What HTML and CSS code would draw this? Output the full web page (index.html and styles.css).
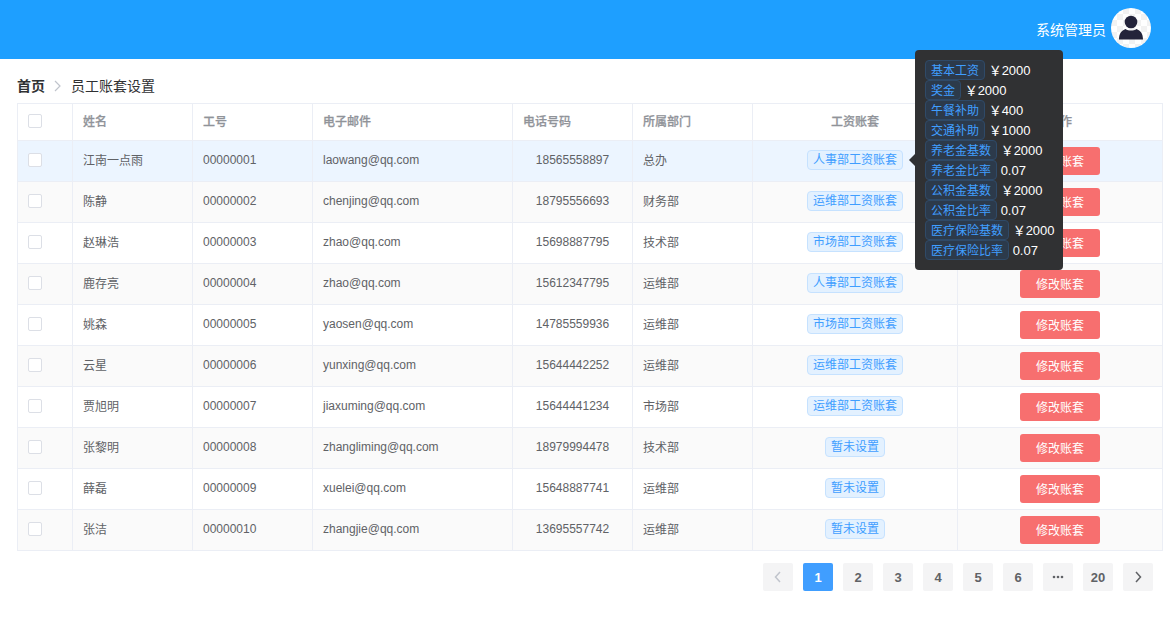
FILE: index.html
```html
<!DOCTYPE html>
<html lang="zh">
<head>
<meta charset="utf-8">
<title>员工账套设置</title>
<link rel="stylesheet" href="styles.css">
</head>
<body>
<header class="topbar">
  <span class="user-name">系统管理员</span>
  <span class="avatar">
    <svg viewBox="0 0 40 40" width="40" height="40">
      <defs><pattern id="chk" width="12" height="12" patternUnits="userSpaceOnUse"><rect width="12" height="12" fill="#fff"/><rect width="6" height="6" fill="#f2f2f2"/><rect x="6" y="6" width="6" height="6" fill="#f2f2f2"/></pattern></defs>
      <circle cx="20" cy="20" r="20" fill="url(#chk)"/>
      <circle cx="20" cy="14" r="6.300" fill="#23233a"/>
      <path d="M8 31.500c0-6 2.500-9 6.500-10.500 3 2 8 2 11 0 4 1.500 6.500 4.500 6.500 10.500z" fill="#23233a"/>
    </svg>
  </span>
</header>
<main class="content">
  <nav class="crumbs"><b>首页</b><svg class="crumb-sep" viewBox="0 0 10 12" width="10" height="12"><path d="M2 1l5 5-5 5" fill="none" stroke="#c0c4cc" stroke-width="1.200"/></svg><span>员工账套设置</span></nav>
  <table class="grid">
    <colgroup><col class="c1"><col class="c2"><col class="c3"><col class="c4"><col class="c5"><col class="c6"><col class="c7"><col class="c8"></colgroup>
    <thead>
      <tr><th class="box"><i class="check"></i></th><th>姓名</th><th>工号</th><th>电子邮件</th><th>电话号码</th><th>所属部门</th><th class="mid">工资账套</th><th class="mid">操作</th></tr>
    </thead>
    <tbody>
      <tr class="hover"><td class="box"><i class="check"></i></td><td class="cn">江南一点雨</td><td>00000001</td><td>laowang@qq.com</td><td class="mid">18565558897</td><td class="cn">总办</td><td class="mid"><span class="tag">人事部工资账套</span></td><td class="mid act"><button class="btn">修改账套</button></td></tr>
      <tr class="alt"><td class="box"><i class="check"></i></td><td class="cn">陈静</td><td>00000002</td><td>chenjing@qq.com</td><td class="mid">18795556693</td><td class="cn">财务部</td><td class="mid"><span class="tag">运维部工资账套</span></td><td class="mid act"><button class="btn">修改账套</button></td></tr>
      <tr><td class="box"><i class="check"></i></td><td class="cn">赵琳浩</td><td>00000003</td><td>zhao@qq.com</td><td class="mid">15698887795</td><td class="cn">技术部</td><td class="mid"><span class="tag">市场部工资账套</span></td><td class="mid act"><button class="btn">修改账套</button></td></tr>
      <tr class="alt"><td class="box"><i class="check"></i></td><td class="cn">鹿存亮</td><td>00000004</td><td>zhao@qq.com</td><td class="mid">15612347795</td><td class="cn">运维部</td><td class="mid"><span class="tag">人事部工资账套</span></td><td class="mid act"><button class="btn">修改账套</button></td></tr>
      <tr><td class="box"><i class="check"></i></td><td class="cn">姚森</td><td>00000005</td><td>yaosen@qq.com</td><td class="mid">14785559936</td><td class="cn">运维部</td><td class="mid"><span class="tag">市场部工资账套</span></td><td class="mid act"><button class="btn">修改账套</button></td></tr>
      <tr class="alt"><td class="box"><i class="check"></i></td><td class="cn">云星</td><td>00000006</td><td>yunxing@qq.com</td><td class="mid">15644442252</td><td class="cn">运维部</td><td class="mid"><span class="tag">运维部工资账套</span></td><td class="mid act"><button class="btn">修改账套</button></td></tr>
      <tr><td class="box"><i class="check"></i></td><td class="cn">贾旭明</td><td>00000007</td><td>jiaxuming@qq.com</td><td class="mid">15644441234</td><td class="cn">市场部</td><td class="mid"><span class="tag">运维部工资账套</span></td><td class="mid act"><button class="btn">修改账套</button></td></tr>
      <tr class="alt"><td class="box"><i class="check"></i></td><td class="cn">张黎明</td><td>00000008</td><td>zhangliming@qq.com</td><td class="mid">18979994478</td><td class="cn">技术部</td><td class="mid"><span class="tag">暂未设置</span></td><td class="mid act"><button class="btn">修改账套</button></td></tr>
      <tr><td class="box"><i class="check"></i></td><td class="cn">薛磊</td><td>00000009</td><td>xuelei@qq.com</td><td class="mid">15648887741</td><td class="cn">运维部</td><td class="mid"><span class="tag">暂未设置</span></td><td class="mid act"><button class="btn">修改账套</button></td></tr>
      <tr class="alt"><td class="box"><i class="check"></i></td><td class="cn">张洁</td><td>00000010</td><td>zhangjie@qq.com</td><td class="mid">13695557742</td><td class="cn">运维部</td><td class="mid"><span class="tag">暂未设置</span></td><td class="mid act"><button class="btn">修改账套</button></td></tr>
    </tbody>
  </table>
  <nav class="pager">
    <button class="page off"><svg viewBox="0 0 10 12" width="10" height="12"><path d="M7 1L2.500 6 7 11" fill="none" stroke="#c0c4cc" stroke-width="1.500"/></svg></button>
    <button class="page on">1</button>
    <button class="page">2</button>
    <button class="page">3</button>
    <button class="page">4</button>
    <button class="page">5</button>
    <button class="page">6</button>
    <button class="page"><svg viewBox="0 0 12 4" width="12" height="4"><circle cx="2" cy="2" r="1.300" fill="#606266"/><circle cx="6" cy="2" r="1.300" fill="#606266"/><circle cx="10" cy="2" r="1.300" fill="#606266"/></svg></button>
    <button class="page">20</button>
    <button class="page"><svg viewBox="0 0 10 12" width="10" height="12"><path d="M3 1l4.500 5L3 11" fill="none" stroke="#606266" stroke-width="1.500"/></svg></button>
  </nav>
</main>
<aside class="tip">
  <div class="tip-row"><span class="tip-tag">基本工资</span> ￥2000</div>
  <div class="tip-row"><span class="tip-tag">奖金</span> ￥2000</div>
  <div class="tip-row"><span class="tip-tag">午餐补助</span> ￥400</div>
  <div class="tip-row"><span class="tip-tag">交通补助</span> ￥1000</div>
  <div class="tip-row"><span class="tip-tag">养老金基数</span> ￥2000</div>
  <div class="tip-row"><span class="tip-tag">养老金比率</span> 0.07</div>
  <div class="tip-row"><span class="tip-tag">公积金基数</span> ￥2000</div>
  <div class="tip-row"><span class="tip-tag">公积金比率</span> 0.07</div>
  <div class="tip-row"><span class="tip-tag">医疗保险基数</span> ￥2000</div>
  <div class="tip-row"><span class="tip-tag">医疗保险比率</span> 0.07</div>
</aside>
</body>
</html>
```
FILE: styles.css
```css
* { box-sizing: border-box; }
html, body { margin: 0; height: 100%; overflow: hidden; }
body {
  font-family: "Liberation Sans", "Noto Sans CJK SC", sans-serif;
  font-size: 12px;
  color: #606266;
  background: #fff;
  position: relative;
}
.topbar {
  height: 59px;
  background: #1e9fff;
  display: flex;
  align-items: center;
  justify-content: flex-end;
  padding: 0 19px 3px 0;
  color: #fff;
}
.user-name { font-size: 14px; margin: 2px 5px 0 0; }
.avatar { width: 40px; height: 40px; display: block; }
.avatar svg { display: block; }
.content { padding: 0 7px 0 17px; }
.crumbs {
  height: 44px;
  display: flex;
  align-items: center;
  font-size: 14px;
  color: #303133;
  padding-top: 8px;
}
.crumbs b { color: #303133; font-weight: 700; }
.crumb-sep { margin: 2px 8px 0; }
.grid {
  width: 1145px;
  border-collapse: collapse;
  table-layout: fixed;
  border: 1px solid #ebeef5;
}
.c1 { width: 55px; } .c2, .c3, .c5, .c6 { width: 120px; }
.c4 { width: 200px; } .c7 { width: 205px; } .c8 { width: 205px; }
.grid th, .grid td {
  border: 1px solid #ebeef5;
  padding: 0 10px 2px;
  text-align: left;
  font-size: 12px;
  height: 41px;
}
.grid th {
  height: 37px;
  color: #909399;
  font-weight: 500;
  padding-bottom: 4px;
  -webkit-text-stroke: 0.25px #909399;
}
.grid th.box { padding-bottom: 2px; }
.grid td.cn { padding-bottom: 4px; }
.grid td.act { padding-bottom: 0; }
.grid th.mid, .grid td.mid { text-align: center; }
.alt td { background: #fafafa; }
.hover td { background: #ecf5ff; }
.check {
  display: block;
  width: 14px;
  height: 14px;
  border: 1px solid #dcdfe6;
  border-radius: 2px;
  background: #fff;
}
.tag {
  display: inline-block;
  height: 20px;
  line-height: 19px;
  padding: 0 5px;
  font-size: 12px;
  color: #409eff;
  background: #e3f1ff;
  border: 1px solid #c6e2ff;
  border-radius: 4px;
  vertical-align: middle;
}
.btn {
  width: 80px;
  height: 28px;
  padding: 0 0 2px;
  border: 0;
  border-radius: 3px;
  background: #f76f6f;
  color: #fff;
  font: inherit;
  font-size: 12px;
  vertical-align: middle;
}
.pager {
  display: flex;
  justify-content: flex-end;
  gap: 10px;
  margin-top: 12px;
  padding-right: 10px;
}
.page {
  width: 30px;
  height: 28px;
  padding: 0;
  border: 0;
  border-radius: 2px;
  background: #f4f4f5;
  color: #606266;
  font: bold 13px "Liberation Sans", sans-serif;
  display: flex;
  align-items: center;
  justify-content: center;
}
.page.on { background: #409eff; color: #fff; }
.tip {
  position: absolute;
  left: 915px;
  top: 50px;
  width: 148px;
  height: 220px;
  padding: 10px;
  background: #303133;
  border-radius: 4px;
  color: #fff;
  font-size: 13px;
  line-height: 22px;
}
.tip::before {
  content: "";
  position: absolute;
  left: -6px;
  top: 104px;
  border: 6px solid transparent;
  border-left-width: 0;
  border-right-color: #303133;
}
.tip-row { height: 20px; white-space: nowrap; }
.tip-tag {
  display: inline-block;
  height: 20px;
  line-height: 20px;
  padding: 0 5px;
  font-size: 12px;
  color: #409eff;
  background: #2c3a4b;
  border: 1px solid #2f4a68;
  border-radius: 4px;
  vertical-align: top;
}
```
